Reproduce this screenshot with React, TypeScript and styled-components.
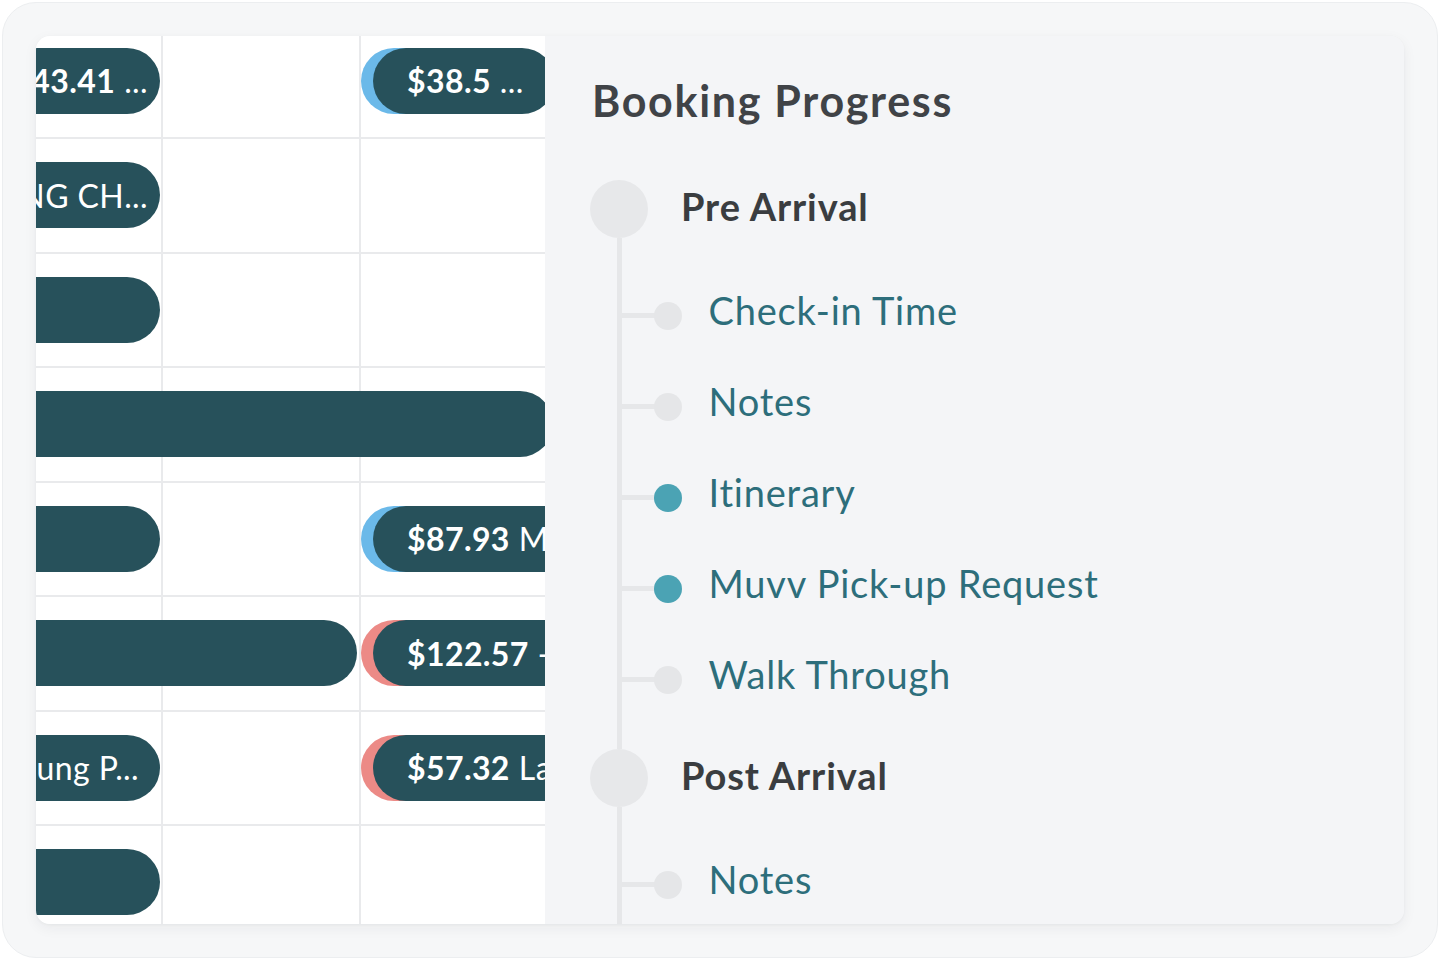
import React from "react";
import styled, { createGlobalStyle } from "styled-components";

const GlobalStyle = createGlobalStyle`
  html, body { margin: 0; padding: 0; background: #ffffff; }
  body { font-family: Lato, "Open Sans", sans-serif; -webkit-font-smoothing: antialiased; }
  * { box-sizing: border-box; }
`;

const Page = styled.div`
  width: 1440px;
  height: 969px;
  padding: 2px;
`;

const Frame = styled.div`
  width: 1436px;
  height: 956px;
  border-radius: 34px;
  background: #f6f7f8;
  border: 1px solid #eceef0;
  padding: 33px;
`;

const Card = styled.div`
  height: 100%;
  display: grid;
  grid-template-columns: 509px 1fr;
  border-radius: 14px;
  overflow: hidden;
  box-shadow: 0 4px 14px rgba(30, 40, 50, 0.06), 0 1px 3px rgba(30, 40, 50, 0.04);
`;

/* ---------- calendar ---------- */
const Calendar = styled.div`
  background: #ffffff;
  overflow: hidden;
`;

const Rows = styled.div`
  margin-top: -11.5px;
  display: flex;
  flex-direction: column;
`;

const Row = styled.div`
  flex: none;
  height: 114.5px;
  display: grid;
  grid-template-columns: 127px 198px 1fr;
  border-bottom: 2px solid #e9eaec;
`;

const Cell = styled.div<{ $col: number }>`
  grid-row: 1;
  grid-column: ${(p) => p.$col};
  border-right: ${(p) => (p.$col < 3 ? "2px solid #e9eaec" : "none")};
`;

type Span = "left" | "leftWide" | "full" | "right";

const spanCss: Record<Span, string> = {
  left: "grid-column: 1; margin-left: -300px; margin-right: 3px; justify-content: flex-end;",
  leftWide: "grid-column: 1 / 3; margin-left: -300px; margin-right: 4px; justify-content: flex-end;",
  full: "grid-column: 1 / 4; margin-left: -300px;",
  right: "grid-column: 3; margin-left: 12px; justify-content: flex-start; padding-left: 34px;",
};

const Pill = styled.div<{ $span: Span; $accent?: string; $extend?: number; $padEnd?: number }>`
  grid-row: 1;
  z-index: 1;
  align-self: center;
  height: 66px;
  border-radius: 33px;
  background: #27515b;
  color: #ffffff;
  display: flex;
  align-items: center;
  white-space: nowrap;
  overflow: hidden;
  font-size: 32px;
  font-weight: 400;
  letter-spacing: 0.4px;
  ${(p) => spanCss[p.$span]}
  ${(p) => (p.$span !== "left" && p.$span !== "leftWide" ? `margin-right: ${-(p.$extend ?? 0)}px;` : "")}
  ${(p) => (p.$padEnd !== undefined ? `padding-right: ${p.$padEnd}px;` : "")}
  ${(p) => (p.$accent ? `box-shadow: -12px 0 0 ${p.$accent};` : "")}
`;

const Price = styled.span`
  font-weight: 700;
  margin-right: 9px;
`;

const BLUE = "#6bb9e9";
const PINK = "#ec8a86";

type PillData = {
  span: Span;
  price?: string;
  text?: string;
  accent?: string;
  extend?: number;
  padEnd?: number;
};

const rows: PillData[][] = [
  [
    { span: "left", price: "$43.41", text: "...", padEnd: 12 },
    { span: "right", price: "$38.5", text: "...", accent: BLUE, extend: 10 },
  ],
  [{ span: "left", text: "PARKING CH...", padEnd: 12 }],
  [{ span: "left" }],
  [{ span: "full", extend: 8 }],
  [
    { span: "left" },
    { span: "right", price: "$87.93", text: "Mileage", accent: BLUE, extend: 120 },
  ],
  [
    { span: "leftWide" },
    { span: "right", price: "$122.57", text: "- Cleaning", accent: PINK, extend: 120 },
  ],
  [
    { span: "left", text: "Young P...", padEnd: 21 },
    { span: "right", price: "$57.32", text: "Laundry", accent: PINK, extend: 120 },
  ],
  [{ span: "left" }],
];

/* ---------- progress panel ---------- */
const Panel = styled.div`
  background: #f4f5f7;
  padding: 41px 0 0 45px;
  overflow: hidden;
`;

const Title = styled.h2`
  margin: 0 0 55px 2px;
  font-size: 43px;
  line-height: 48px;
  font-weight: 700;
  letter-spacing: 1.7px;
  color: #404347;
`;

const SectionHead = styled.div`
  display: flex;
  align-items: center;
  height: 58px;
`;

const Bullet = styled.div`
  flex: none;
  width: 58px;
  height: 58px;
  border-radius: 50%;
  background: #e7e8ea;
`;

const SectionTitle = styled.div`
  margin-left: 33px;
  padding-bottom: 6px;
  font-size: 38px;
  font-weight: 700;
  letter-spacing: 0.9px;
  color: #3a3d40;
`;

const ItemList = styled.div`
  margin-left: 26.5px;
  border-left: 5px solid #e6e7e9;
  padding: 32px 0 24px;
`;

const Item = styled.div`
  height: 91px;
  display: flex;
  align-items: center;
`;

const Connector = styled.div`
  flex: none;
  width: 36px;
  height: 5px;
  background: #e6e7e9;
  margin-right: -4px;
`;

const Dot = styled.div<{ $active?: boolean }>`
  flex: none;
  width: 28px;
  height: 28px;
  border-radius: 50%;
  background: ${(p) => (p.$active ? "#4ba3b4" : "#e5e6e8")};
`;

const ItemLabel = styled.div`
  margin-left: 27px;
  padding-bottom: 12px;
  font-size: 38px;
  font-weight: 400;
  letter-spacing: 0.8px;
  color: #2d6e7b;
  white-space: nowrap;
`;

const sections = [
  {
    title: "Pre Arrival",
    items: [
      { label: "Check-in Time" },
      { label: "Notes" },
      { label: "Itinerary", active: true },
      { label: "Muvv Pick-up Request", active: true },
      { label: "Walk Through" },
    ],
  },
  {
    title: "Post Arrival",
    items: [{ label: "Notes" }, { label: "Review" }],
  },
];

export default function App() {
  return (
    <Page>
      <GlobalStyle />
      <Frame>
        <Card>
          <Calendar>
            <Rows>
              {rows.map((pills, i) => (
                <Row key={i}>
                  <Cell $col={1} />
                  <Cell $col={2} />
                  <Cell $col={3} />
                  {pills.map((p, j) => (
                    <Pill
                      key={j}
                      $span={p.span}
                      $accent={p.accent}
                      $extend={p.extend}
                      $padEnd={p.padEnd}
                    >
                      {p.price && <Price>{p.price}</Price>}
                      {p.text}
                    </Pill>
                  ))}
                </Row>
              ))}
            </Rows>
          </Calendar>
          <Panel>
            <Title>Booking Progress</Title>
            {sections.map((s) => (
              <div key={s.title}>
                <SectionHead>
                  <Bullet />
                  <SectionTitle>{s.title}</SectionTitle>
                </SectionHead>
                <ItemList>
                  {s.items.map((it, k) => (
                    <Item key={k}>
                      <Connector />
                      <Dot $active={it.active} />
                      <ItemLabel>{it.label}</ItemLabel>
                    </Item>
                  ))}
                </ItemList>
              </div>
            ))}
          </Panel>
        </Card>
      </Frame>
    </Page>
  );
}
